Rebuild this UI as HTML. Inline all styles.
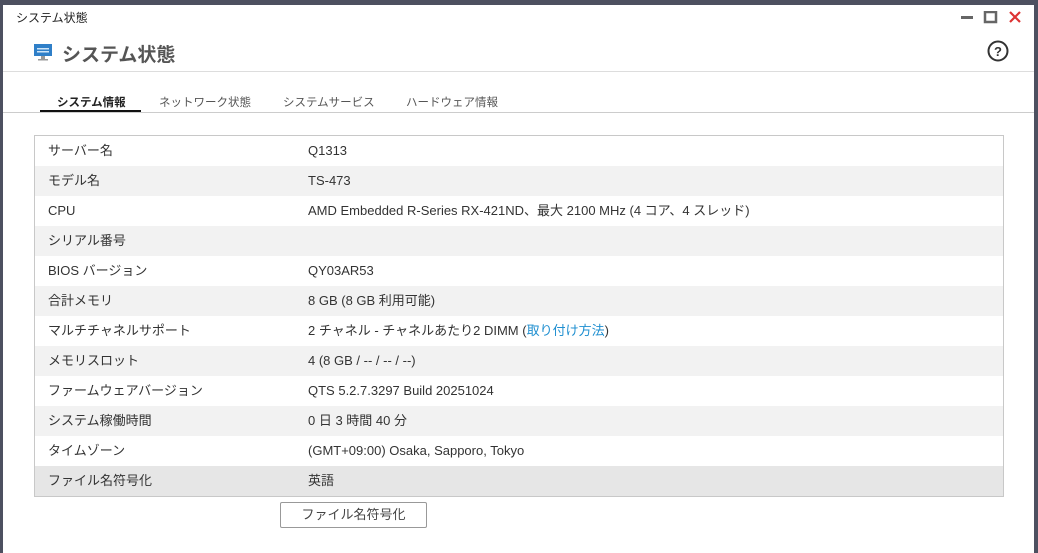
<!DOCTYPE html><html><head><meta charset="utf-8"><style>
body{margin:0;width:1038px;height:553px;background:#4d5060;position:relative;overflow:hidden;font-family:"Liberation Sans","Noto Sans CJK JP",sans-serif;color:#333}
.win{position:absolute;left:3px;top:5px;width:1031px;height:548px;background:#fff}
.t{position:absolute;left:13px;top:4px;font-size:12px;color:#222}
.h{position:absolute;left:59px;top:35px;font-size:19px;font-weight:bold;color:#555}
.hl{position:absolute;left:0;top:66px;width:1031px;height:1px;background:#ddd}
.tl{position:absolute;left:0;top:107px;width:1031px;height:1px;background:#ccc}
.tab{position:absolute;top:89px;font-size:11.5px;color:#555}
.ul{position:absolute;left:37px;top:105px;width:101px;height:3px;background:#111}
table{position:absolute;left:31px;top:130px;width:970px;border-collapse:collapse;border:1px solid #c8c8c8;font-size:13px}
td{height:30px;padding:0;color:#333;line-height:30px;vertical-align:middle;white-space:nowrap}
td:first-child{padding-left:13px;width:260px}
tr:nth-child(even){background:#f2f2f2}
tr:last-child{background:#e6e6e6}
a{color:#1f8fd0;text-decoration:none}
.btn{position:absolute;left:277px;top:497px;width:145px;height:24px;border:1px solid #999;border-radius:2px;font-size:13px;text-align:center;line-height:24px;color:#444}
</style></head><body><div class="win">
<div class="t">システム状態</div>
<svg style="position:absolute;left:31px;top:39px" width="18" height="17"><rect x="0" y="0" width="18" height="12" fill="#2f7fc8"/><rect x="3" y="4" width="12" height="1.5" fill="#cfe5f7"/><rect x="3" y="7" width="12" height="1.5" fill="#cfe5f7"/><rect x="7" y="12" width="4" height="3" fill="#999"/><rect x="4" y="15" width="10" height="1.5" fill="#999"/></svg>
<div class="h">システム状態</div>
<svg style="position:absolute;left:957px;top:6px" width="70" height="14"><rect x="1" y="5" width="12" height="3" fill="#666"/><rect x="25" y="1" width="11" height="10" fill="none" stroke="#666" stroke-width="2.5"/><path d="M50 1L60 11M60 1L50 11" stroke="#d33" stroke-width="2.2"/></svg>
<svg style="position:absolute;left:984px;top:35px" width="22" height="22"><circle cx="11" cy="11" r="9.5" fill="none" stroke="#333" stroke-width="2"/><text x="11" y="16" font-size="13" font-weight="bold" text-anchor="middle" fill="#333" font-family="Liberation Sans">?</text></svg>
<div class="hl"></div>
<div class="tab" style="left:54px;color:#222;font-weight:bold">システム情報</div>
<div class="tab" style="left:156px">ネットワーク状態</div>
<div class="tab" style="left:280px">システムサービス</div>
<div class="tab" style="left:403px">ハードウェア情報</div>
<div class="ul"></div><div class="tl"></div>
<table>
<tr><td>サーバー名</td><td>Q1313</td></tr>
<tr><td>モデル名</td><td>TS-473</td></tr>
<tr><td>CPU</td><td>AMD Embedded R-Series RX-421ND、最大 2100 MHz (4 コア、4 スレッド)</td></tr>
<tr><td>シリアル番号</td><td></td></tr>
<tr><td>BIOS バージョン</td><td>QY03AR53</td></tr>
<tr><td>合計メモリ</td><td>8 GB (8 GB 利用可能)</td></tr>
<tr><td>マルチチャネルサポート</td><td>2 チャネル - チャネルあたり2 DIMM (<a>取り付け方法</a>)</td></tr>
<tr><td>メモリスロット</td><td>4 (8 GB / -- / -- / --)</td></tr>
<tr><td>ファームウェアバージョン</td><td>QTS 5.2.7.3297 Build 20251024</td></tr>
<tr><td>システム稼働時間</td><td>0 日 3 時間 40 分</td></tr>
<tr><td>タイムゾーン</td><td>(GMT+09:00) Osaka, Sapporo, Tokyo</td></tr>
<tr><td>ファイル名符号化</td><td>英語</td></tr>
</table>
<div class="btn">ファイル名符号化</div>
</div></body></html>
